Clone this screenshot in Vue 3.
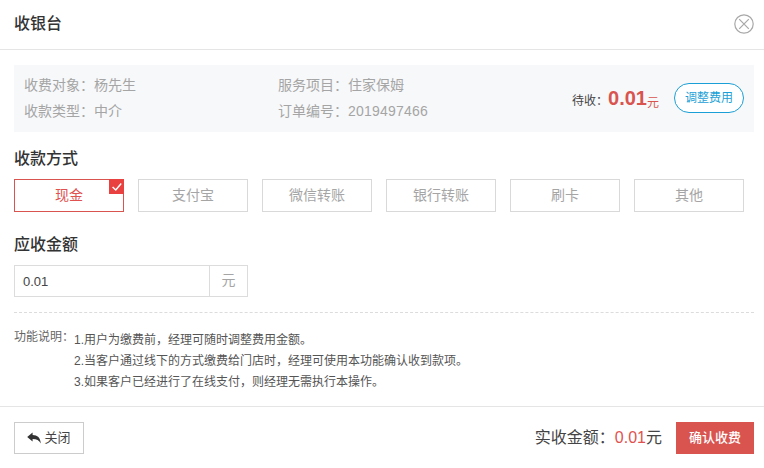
<script setup>
const methods = ['现金', '支付宝', '微信转账', '银行转账', '刷卡', '其他']
const notes = [
  '1.用户为缴费前，经理可随时调整费用金额。',
  '2.当客户通过线下的方式缴费给门店时，经理可使用本功能确认收到款项。',
  '3.如果客户已经进行了在线支付，则经理无需执行本操作。'
]
</script>

<template>
  <div class="dialog">
    <header class="head">
      <h1 class="title">收银台</h1>
      <svg class="close-x" width="20" height="20" viewBox="0 0 20 20" fill="none" stroke="#a8a8a8" stroke-width="1.2">
        <circle cx="10" cy="10" r="9.2" />
        <path d="M5.2 5.2 14.8 14.8M14.8 5.2 5.2 14.8" />
      </svg>
    </header>

    <section class="info">
      <div class="info-grid">
        <span>收费对象：杨先生</span>
        <span>服务项目：住家保姆</span>
        <span>收款类型：中介</span>
        <span>订单编号：<span class="order-no">2019497466</span></span>
      </div>
      <div class="due">
        <span class="due-label">待收：</span>
        <span class="due-num">0.01</span>
        <span class="due-unit">元</span>
        <button class="adjust">调整费用</button>
      </div>
    </section>

    <h2 class="sub sub-pay">收款方式</h2>
    <div class="methods">
      <div v-for="(m, i) in methods" :key="m" class="method" :class="{ active: i === 0 }">
        {{ m }}
        <span v-if="i === 0" class="tick">
          <svg width="14" height="14" viewBox="0 0 14 14" fill="none" stroke="#fff" stroke-width="1.5">
            <path d="M2.6 7 5.8 10 11.2 3.6" />
          </svg>
        </span>
      </div>
    </div>

    <h2 class="sub sub-amount">应收金额</h2>
    <div class="amount">
      <div class="amount-val">0.01</div>
      <div class="amount-unit">元</div>
    </div>

    <div class="dash"></div>

    <div class="notes">
      <div class="notes-label">功能说明：</div>
      <div class="notes-list">
        <div v-for="n in notes" :key="n">{{ n }}</div>
      </div>
    </div>

    <footer class="foot">
      <button class="btn-close">
        <svg width="14" height="12" viewBox="0 0 14 12" fill="#333">
          <path d="M0.2 5 5.6 0.4V3C10.5 3.1 13.4 5.6 13.8 11.4 12.2 8.4 9.8 7 5.6 7V9.6Z" />
        </svg>
        <span class="close-text">关闭</span>
      </button>
      <div class="total">实收金额：<span class="red">0.01</span>元</div>
      <button class="confirm">确认收费</button>
    </footer>
  </div>
</template>

<style scoped>
.dialog {
  position: relative;
  width: 764px;
  height: 468px;
  background: #fff;
  font-family: "Liberation Sans", "Noto Sans CJK SC", sans-serif;
  color: #333;
  overflow: hidden;
}
.head {
  height: 45px;
  border-bottom: 1px solid #e5e5e5;
  display: flex;
  align-items: center;
  justify-content: space-between;
  padding: 0 10px 4px 14px;
}
.close-x {
  margin-top: 2px;
}
.title {
  margin: 0 0 2px;
  font-size: 16px;
  font-weight: 500;
  color: #333;
}
.info {
  margin: 15px 10px 0 14px;
  height: 67px;
  background: #f7f8fa;
  display: flex;
  justify-content: space-between;
  align-items: center;
  padding: 0 10px 2px;
  box-sizing: border-box;
}
.info-grid {
  display: grid;
  grid-template-columns: 254px 254px;
  row-gap: 6px;
  font-size: 14px;
  line-height: 20px;
  color: #a5a5a5;
}
.order-no {
  letter-spacing: 0.2px;
}
.due {
  display: flex;
  align-items: center;
}
.due-label {
  font-size: 12px;
  color: #444;
  margin-top: 4px;
  margin-left: -1px;
}
.due-num {
  font-size: 20px;
  font-weight: 700;
  color: #d9534f;
  margin-top: 2px;
}
.due-unit {
  font-size: 12px;
  color: #d9534f;
  margin-top: 7px;
}
.adjust {
  margin-left: 15px;
  width: 70px;
  height: 30px;
  padding: 0 0 3px;
  border: 1px solid #1a9fd6;
  border-radius: 15px;
  background: #fff;
  color: #1a9fd6;
  font: inherit;
  font-size: 12px;
}
.sub {
  margin: 0 0 0 14px;
  font-size: 16px;
  font-weight: 500;
  line-height: 22px;
  color: #333;
}
.sub-pay {
  margin-top: 16px;
}
.methods {
  display: flex;
  gap: 14px;
  margin: 9px 0 0 14px;
}
.method {
  position: relative;
  width: 110px;
  height: 33px;
  box-sizing: border-box;
  border: 1px solid #d9d9d9;
  padding-bottom: 3px;
  display: flex;
  align-items: center;
  justify-content: center;
  font-size: 14px;
  color: #a5a5a5;
}
.method.active {
  border-color: #d9534f;
  color: #e0524f;
}
.tick {
  position: absolute;
  top: -1px;
  right: -1px;
  width: 15px;
  height: 15px;
  background: #e8413f;
  display: flex;
  align-items: center;
  justify-content: center;
}
.sub-amount {
  margin-top: 22px;
}
.amount {
  display: flex;
  width: 234px;
  height: 32px;
  margin: 9px 0 0 14px;
  box-sizing: border-box;
  border: 1px solid #dcdcdc;
}
.amount-val {
  flex: 1;
  padding: 1px 0 0 8px;
  font-size: 13px;
  line-height: 29px;
  color: #444;
}
.amount-unit {
  width: 37px;
  border-left: 1px solid #dcdcdc;
  text-align: center;
  font-size: 14px;
  line-height: 28px;
  color: #a5a5a5;
}
.dash {
  margin: 15px 10px 0 14px;
  border-top: 1px dashed #dcdcdc;
}
.notes {
  display: flex;
  margin: 14px 0 0 14px;
  font-size: 12px;
  color: #555;
}
.notes-label {
  width: 60px;
  line-height: 20px;
  color: #666;
}
.notes-list {
  padding-top: 3px;
  line-height: 21px;
}
.foot {
  position: absolute;
  top: 406px;
  left: 0;
  width: 764px;
  box-sizing: border-box;
  height: 62px;
  border-top: 1px solid #e5e5e5;
  padding: 15px 10px 0 14px;
  display: flex;
  align-items: flex-start;
}
.btn-close {
  width: 70px;
  height: 32px;
  box-sizing: border-box;
  border: 1px solid #ccc;
  background: #fff;
  padding: 0;
  display: flex;
  align-items: center;
  justify-content: center;
  gap: 3px;
  font: inherit;
  font-size: 13px;
  color: #444;
}
.close-text {
  margin-top: -3px;
}
.total {
  margin-left: auto;
  font-size: 16px;
  line-height: 32px;
  color: #444;
}
.red {
  color: #e0524f;
}
.confirm {
  margin-left: 14px;
  width: 78px;
  height: 32px;
  border: none;
  padding: 0 0 3px;
  background: #d9534f;
  color: #fff;
  font: inherit;
  font-size: 13px;
  font-weight: 500;
}
</style>
